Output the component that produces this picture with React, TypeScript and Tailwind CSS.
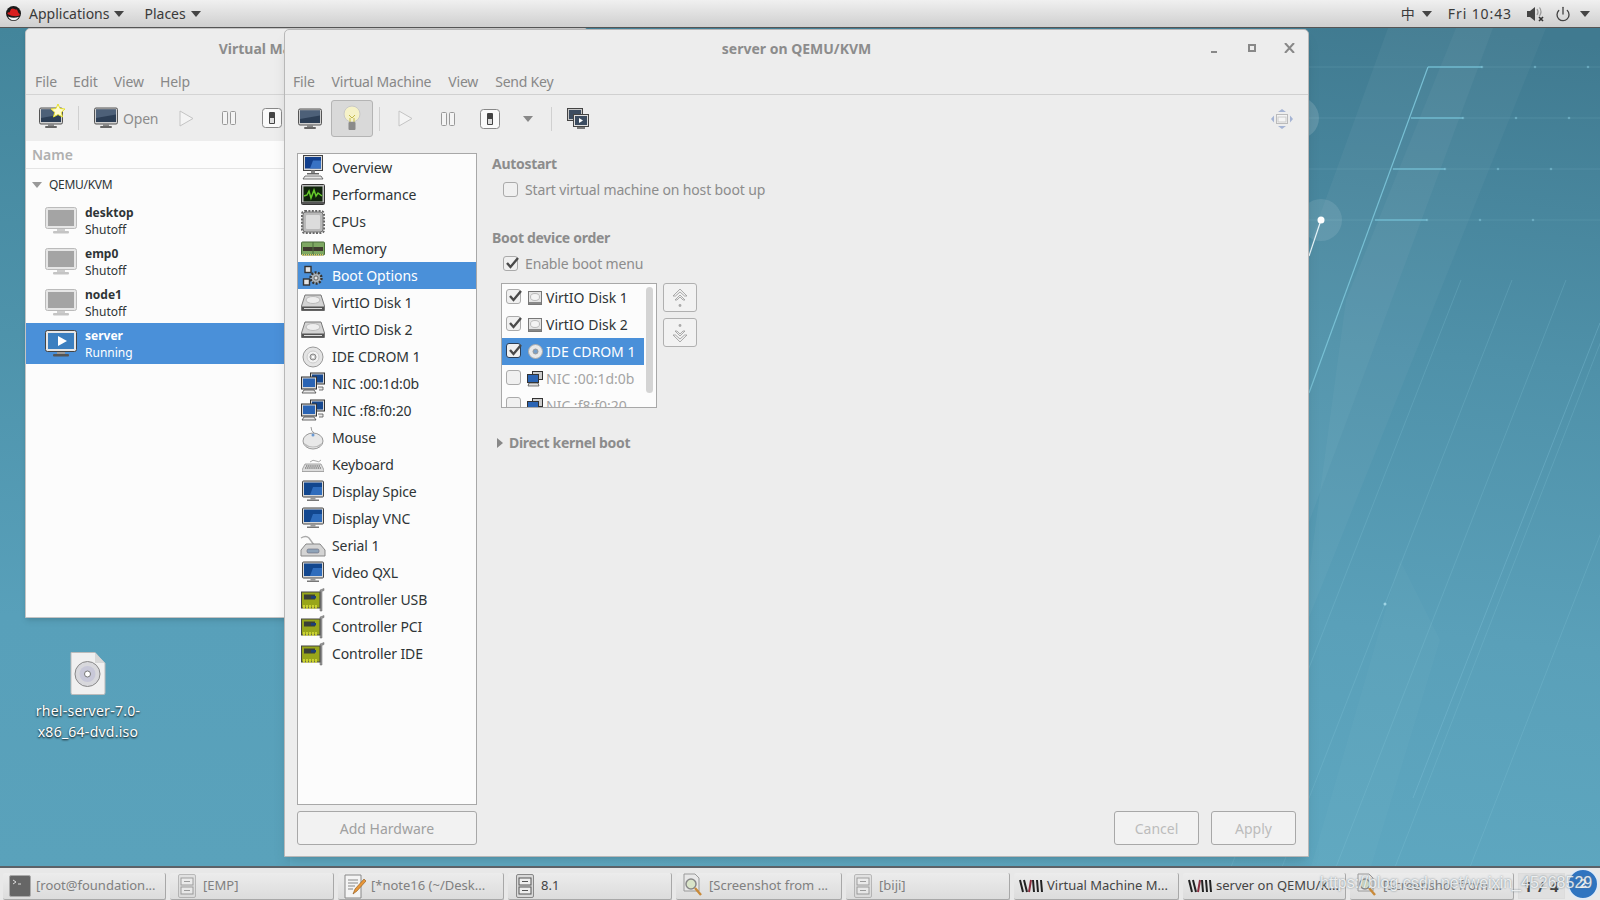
import React from 'react'
import { Power } from 'lucide-react'

const Caret = ({ className = '' }: { className?: string }) => (
  <svg width="10" height="6" viewBox="0 0 10 6" className={className}>
    <path d="M0 0h10L5 6z" fill="currentColor" />
  </svg>
)

const ToolMonitor = () => (
  <svg width="24" height="22" viewBox="0 0 24 22">
    <rect x="0.5" y="1" width="23" height="16" rx="1.5" fill="#d0d0d0" stroke="#555" />
    <rect x="2" y="2.5" width="20" height="12.5" fill="#2c3e55" />
    <path d="M2 2.5h20v5L2 11z" fill="#4d6078" />
    <rect x="9" y="17" width="6" height="2" fill="#888" />
    <rect x="6" y="19" width="12" height="2" rx="1" fill="#666" />
  </svg>
)

const Play = () => (
  <svg width="15" height="17" viewBox="0 0 15 17">
    <path d="M1 1l13 7.5L1 16z" fill="#f4f4f4" stroke="#c4c4c4" />
  </svg>
)

const Pause = () => (
  <svg width="14" height="14" viewBox="0 0 14 14">
    <rect x="0.5" y="0.5" width="5" height="13" rx="1" fill="#f4f4f4" stroke="#999" />
    <rect x="8.5" y="0.5" width="5" height="13" rx="1" fill="#f4f4f4" stroke="#999" />
  </svg>
)

const Stop = () => (
  <svg width="20" height="20" viewBox="0 0 20 20">
    <rect x="0.5" y="0.5" width="19" height="19" rx="3" fill="#fafafa" stroke="#888" />
    <rect x="7" y="4" width="6" height="12" rx="1" fill="#444" />
    <rect x="8" y="10" width="4" height="5" fill="#ddd" />
  </svg>
)

const VmMonitor = ({ running = false }: { running?: boolean }) => (
  <svg width="32" height="28" viewBox="0 0 32 28">
    <rect x="0.5" y="0.5" width="31" height="21" rx="2" fill="#e6e6e6" stroke={running ? '#444' : '#bbb'} />
    <rect x="3" y="3" width="26" height="16" fill={running ? '#3b7fc0' : '#a4a4a4'} />
    {running && <path d="M13 6l9 5-9 5z" fill="#fff" />}
    <rect x="12" y="22" width="8" height="2" fill={running ? '#999' : '#ccc'} />
    <rect x="8" y="24" width="16" height="2.5" rx="1" fill={running ? '#555' : '#c4c4c4'} />
  </svg>
)

const BlueMonitor = () => (
  <svg width="24" height="24" viewBox="0 0 24 24">
    <rect x="1.5" y="1" width="21" height="16" rx="1" fill="#d8d8d8" stroke="#444" />
    <rect x="3" y="2.5" width="18" height="12.5" fill="#12478f" />
    <path d="M9 15l3-8h9v8z" fill="#2f6dbd" />
    <rect x="9.5" y="17" width="5" height="2.5" fill="#999" />
    <rect x="6" y="19.5" width="12" height="1.5" fill="#777" />
  </svg>
)

const HwIcon = ({ kind }: { kind: string }) => {
  if (kind === 'overview')
    return (
      <svg width="24" height="26" viewBox="0 0 24 26">
        <rect x="2.5" y="0.5" width="19" height="15" fill="#d8d8d8" stroke="#444" />
        <rect x="4" y="2" width="16" height="11.5" fill="#123f8c" />
        <path d="M9 13.5l3-8h8v8z" fill="#3872c4" />
        <rect x="10" y="15.5" width="4" height="3" fill="#888" />
        <rect x="6" y="18" width="12" height="1.5" fill="#666" />
        <path d="M2 24l2-3h16l2 3z" fill="#e8e8e8" stroke="#555" strokeWidth="0.8" />
      </svg>
    )
  if (kind === 'perf')
    return (
      <svg width="24" height="22" viewBox="0 0 24 22">
        <rect x="0.5" y="0.5" width="23" height="20" rx="1" fill="#bbb" stroke="#333" />
        <rect x="2.5" y="2.5" width="19" height="15" fill="#10240c" />
        <path d="M3 12l3-1 2-4 2 7 3-8 2 6 2-3 4 3" fill="none" stroke="#64c82a" strokeWidth="1.5" />
        <rect x="1" y="18" width="22" height="2" fill="#555" />
      </svg>
    )
  if (kind === 'cpu')
    return (
      <svg width="24" height="24" viewBox="0 0 24 24">
        <rect x="1" y="1" width="22" height="22" rx="3" fill="none" stroke="#666" strokeWidth="2" strokeDasharray="2 1.4" />
        <rect x="2" y="2" width="20" height="20" rx="3" fill="#b8b8b8" stroke="#777" />
        <rect x="5" y="5" width="14" height="14" rx="1" fill="#dcdcdc" />
      </svg>
    )
  if (kind === 'memory')
    return (
      <svg width="24" height="16" viewBox="0 0 24 16">
        <rect x="0.5" y="1" width="23" height="13" rx="1" fill="#7ea862" stroke="#4a6d3b" />
        <rect x="2" y="6" width="20" height="4" fill="#3e3a2e" />
        <rect x="11.5" y="1" width="1" height="13" fill="#4a6d3b" />
        <path d="M1 14h22" stroke="#d4c46a" strokeWidth="2" strokeDasharray="1 1" />
      </svg>
    )
  if (kind === 'boot')
    return (
      <svg width="22" height="22" viewBox="0 0 22 22">
        <circle cx="14" cy="13" r="5.5" fill="#aab2b8" stroke="#333" strokeWidth="2.4" strokeDasharray="2 1.4" />
        <circle cx="14" cy="13" r="2" fill="#e4e4e4" stroke="#444" strokeWidth="0.7" />
        <rect x="3" y="1.5" width="6" height="6" fill="#e4e4e4" stroke="#333" strokeWidth="1.4" />
        <rect x="1.5" y="14" width="6" height="6" fill="#e4e4e4" stroke="#333" strokeWidth="1.4" />
      </svg>
    )
  if (kind === 'disk')
    return (
      <svg width="24" height="18" viewBox="0 0 24 18">
        <path d="M4 1h16l3.5 11v4.5h-23V12z" fill="#d4d4d4" stroke="#777" />
        <path d="M1 12.5h22v4H1z" fill="#555" />
        <path d="M3 14.5h18" stroke="#ddd" />
        <ellipse cx="12" cy="6" rx="7" ry="3.5" fill="#eee" stroke="#bbb" />
      </svg>
    )
  if (kind === 'cdrom')
    return (
      <svg width="22" height="22" viewBox="0 0 22 22">
        <circle cx="11" cy="11" r="10" fill="#e4e4e4" stroke="#999" />
        <circle cx="11" cy="11" r="6" fill="#f2f2f2" stroke="#ccc" />
        <circle cx="11" cy="11" r="3" fill="#ccc" stroke="#888" />
        <circle cx="11" cy="11" r="1.2" fill="#fff" />
      </svg>
    )
  if (kind === 'nic')
    return (
      <svg width="24" height="24" viewBox="0 0 24 24">
        <rect x="9.5" y="1" width="14" height="11" fill="#d8d8d8" stroke="#333" />
        <rect x="11" y="2.5" width="11" height="8" fill="#16488f" />
        <rect x="0.5" y="5" width="15" height="12" fill="#d8d8d8" stroke="#333" />
        <rect x="2" y="6.5" width="12" height="8.5" fill="#2a64b4" />
        <path d="M1 21l2-3h10l2 3z" fill="#e8e8e8" stroke="#444" strokeWidth="0.8" />
        <path d="M17 15h5v3h-4" fill="#e8e8e8" stroke="#555" strokeWidth="0.8" />
      </svg>
    )
  if (kind === 'mouse')
    return (
      <svg width="22" height="24" viewBox="0 0 22 24">
        <path d="M9 1q0 4 3 6" fill="none" stroke="#999" />
        <ellipse cx="11" cy="15" rx="10" ry="8" fill="#e8e8e8" stroke="#999" />
        <path d="M2 17q9 7 18 0v2q-9 5-18 0z" fill="#bbb" />
        <circle cx="11" cy="9" r="1.5" fill="#6a9ad4" />
      </svg>
    )
  if (kind === 'keyboard')
    return (
      <svg width="22" height="14" viewBox="0 0 22 14">
        <path d="M8 4q3-3 6-1t5-1" fill="none" stroke="#aaa" />
        <path d="M3 6h16l3 6v1.500H0V12z" fill="#dcdcdc" stroke="#888" strokeWidth="0.7" />
        <path d="M4 8h14M3 10h16" stroke="#555" strokeWidth="1" strokeDasharray="1.4 0.7" />
      </svg>
    )
  if (kind === 'serial')
    return (
      <svg width="26" height="24" viewBox="0 0 26 24">
        <path d="M1 4q5-3 8 0l5 7" fill="none" stroke="#aaa" strokeWidth="1.4" />
        <path d="M6 10h14l5 6v6H1v-6z" fill="#d4d4d4" stroke="#888" />
        <rect x="7" y="15" width="12" height="4" rx="1.5" fill="#8fa3b8" stroke="#667" strokeWidth="0.6" />
      </svg>
    )
  if (kind === 'controller')
    return (
      <svg width="24" height="24" viewBox="0 0 24 24">
        <path d="M19 2l4-1.5v2l-2 .8V23h-2z" fill="#999" stroke="#666" strokeWidth="0.5" />
        <rect x="0.5" y="4" width="18.5" height="16" fill="#98a61a" stroke="#444" />
        <rect x="3" y="6.5" width="11" height="5" fill="#3a3f36" />
        <rect x="10" y="8" width="5" height="2.5" fill="#1c3f78" />
        <path d="M3 17v4M6 17v4M9 17v4M12 17v4M15 17v4" stroke="#d7dc3c" strokeWidth="1.6" />
      </svg>
    )
  return <BlueMonitor />
}

const hardware = [
  { name: 'Overview', kind: 'overview' },
  { name: 'Performance', kind: 'perf' },
  { name: 'CPUs', kind: 'cpu' },
  { name: 'Memory', kind: 'memory' },
  { name: 'Boot Options', kind: 'boot' },
  { name: 'VirtIO Disk 1', kind: 'disk' },
  { name: 'VirtIO Disk 2', kind: 'disk' },
  { name: 'IDE CDROM 1', kind: 'cdrom' },
  { name: 'NIC :00:1d:0b', kind: 'nic' },
  { name: 'NIC :f8:f0:20', kind: 'nic' },
  { name: 'Mouse', kind: 'mouse' },
  { name: 'Keyboard', kind: 'keyboard' },
  { name: 'Display Spice', kind: 'display' },
  { name: 'Display VNC', kind: 'display' },
  { name: 'Serial 1', kind: 'serial' },
  { name: 'Video QXL', kind: 'display' },
  { name: 'Controller USB', kind: 'controller' },
  { name: 'Controller PCI', kind: 'controller' },
  { name: 'Controller IDE', kind: 'controller' },
]

const vms = [
  { name: 'desktop', state: 'Shutoff' },
  { name: 'emp0', state: 'Shutoff' },
  { name: 'node1', state: 'Shutoff' },
  { name: 'server', state: 'Running', active: true },
]

const Check = ({ checked, dark = false, className = '' }: { checked: boolean; dark?: boolean; className?: string }) => (
  <span className={`relative block w-[15px] h-[15px] shrink-0 rounded-[3px] border bg-[#f0f0f0] ${dark ? 'border-[#2c3e55]' : 'border-[#aaaaaa]'} ${className}`}>
    {checked && (
      <svg width="16" height="14" viewBox="0 0 16 14" className="absolute left-0 -top-[1px]">
        <path d="M3 7l3.5 4L14 2" fill="none" stroke="#4a4a4a" strokeWidth="2.4" />
      </svg>
    )}
  </span>
)

const bootItems = [
  { name: 'VirtIO Disk 1', kind: 'disk', checked: true },
  { name: 'VirtIO Disk 2', kind: 'disk', checked: true },
  { name: 'IDE CDROM 1', kind: 'cdrom', checked: true, active: true },
  { name: 'NIC :00:1d:0b', kind: 'nic', checked: false },
  { name: 'NIC :f8:f0:20', kind: 'nic', checked: false },
]

const SmallBootIcon = ({ kind }: { kind: string }) => {
  if (kind === 'disk')
    return (
      <svg width="14" height="14" viewBox="0 0 14 14">
        <rect x="0.5" y="0.5" width="13" height="13" fill="#e4e4e4" stroke="#777" />
        <ellipse cx="7" cy="6" rx="4.5" ry="3.5" fill="#f4f4f4" stroke="#bbb" />
        <rect x="1" y="11" width="12" height="2" fill="#888" />
      </svg>
    )
  if (kind === 'cdrom')
    return (
      <svg width="15" height="15" viewBox="0 0 15 15">
        <circle cx="7.5" cy="7.5" r="7" fill="#e8e8e8" stroke="#aaa" />
        <circle cx="7.5" cy="7.5" r="2.5" fill="#7aa0c8" stroke="#999" />
      </svg>
    )
  return (
    <svg width="16" height="16" viewBox="0 0 16 16">
      <rect x="5.5" y="0.5" width="10" height="8" fill="#ccc" stroke="#333" />
      <rect x="0.5" y="3.5" width="11" height="8" fill="#2a64b4" stroke="#333" />
      <path d="M1 15l1-3h9l1 3z" fill="#ddd" stroke="#444" strokeWidth="0.7" />
    </svg>
  )
}

const Arrows = ({ down = false }: { down?: boolean }) => (
  <svg width="16" height="20" viewBox="0 0 16 20" className={down ? 'rotate-180' : ''}>
    <path d="M1 8l7-7 7 7-2.5 0L8 4 3.5 8zM3 12l5-5 5 5-2 0L8 9 5 12z" fill="#eee" stroke="#999" strokeWidth="0.8" />
    <circle cx="8" cy="17.5" r="1.4" fill="#aaa" />
  </svg>
)

const RedHat = () => (
  <svg width="15" height="15" viewBox="0 0 15 15">
    <circle cx="7.5" cy="7.5" r="7.5" fill="#1a1a1a" />
    <path d="M1.5 8q-.5-2 2-1.600L5 3q2-.8 3.500 0T11 3.500l1.500 3.500q2 1 1 2.400Q8 11.500 1.500 8z" fill="#d81e1e" />
    <path d="M2 10.500q6 2.500 11 .2-2 3.600-5.500 3.600T2 10.500z" fill="#f2f2f2" />
  </svg>
)

const Drawer = ({ muted = false }: { muted?: boolean }) => (
  <svg width="18" height="24" viewBox="0 0 18 24" className={muted ? 'opacity-50' : ''}>
    <rect x="0.5" y="0.5" width="17" height="23" rx="1.5" fill="#d8d8d8" stroke="#888" />
    <rect x="3" y="4" width="12" height="7" fill="#eee" stroke="#555" />
    <rect x="3" y="13" width="12" height="7" fill="#eee" stroke="#555" />
    <path d="M6 7.500h6M6 16.500h6" stroke="#555" />
  </svg>
)

const Terminal = () => (
  <svg width="22" height="22" viewBox="0 0 22 22">
    <rect x="0.5" y="0.5" width="21" height="21" rx="1.500" fill="#666" stroke="#aaa" />
    <path d="M4 5l3 2-3 2M9 9h3" stroke="#ddd" fill="none" />
  </svg>
)

const Notepad = () => (
  <svg width="22" height="26" viewBox="0 0 22 26">
    <path d="M1 2h16v23H1z" fill="#f4f4f4" stroke="#888" />
    <path d="M4 7h10M4 10h10M4 13h7M4 16h5" stroke="#888" />
    <path d="M9 21l2-5 9-10 2 2-9 10z" fill="#e8973a" stroke="#8a5518" strokeWidth="0.6" />
  </svg>
)

const Magnifier = () => (
  <svg width="22" height="26" viewBox="0 0 22 26">
    <path d="M2 1h11l4 4v13H2z" fill="#e8e8e8" stroke="#999" />
    <circle cx="9" cy="11" r="5" fill="#d9e4c8" stroke="#888" strokeWidth="1.500" />
    <path d="M13 15l6 7" stroke="#c98a3a" strokeWidth="2.400" />
  </svg>
)

const VmmLogo = () => (
  <svg width="24" height="16" viewBox="0 0 24 16">
    <path d="M1 2l3 12M5 2l3 12" stroke="#222" strokeWidth="2" />
    <path d="M10 14l2-12" stroke="#8a2f3f" strokeWidth="2" />
    <path d="M14 2l1 12M18 2l1 12M22 2l1 12" stroke="#222" strokeWidth="2" />
  </svg>
)

const tasks = [
  { label: '[root@foundation...', icon: <Terminal />, width: 'w-[163px]', tone: 'text-[#808080]' },
  { label: '[EMP]', icon: <Drawer muted />, width: 'w-[164px]', tone: 'text-[#808080]' },
  { label: '[*note16 (~/Desk...', icon: <Notepad />, width: 'w-[166px]', tone: 'text-[#808080]' },
  { label: '8.1', icon: <Drawer />, width: 'w-[164px]', tone: 'text-[#444444]' },
  { label: '[Screenshot from ...', icon: <Magnifier />, width: 'w-[166px]', tone: 'text-[#808080]' },
  { label: '[biji]', icon: <Drawer muted />, width: 'w-[164px]', tone: 'text-[#808080]' },
  { label: 'Virtual Machine M...', icon: <VmmLogo />, width: 'w-[165px]', tone: 'text-[#444444]' },
  { label: 'server on QEMU/K...', icon: <VmmLogo />, width: 'w-[163px]', tone: 'text-[#444444]' },
  { label: '[Screenshot from ...', icon: <Magnifier />, width: 'w-[164px]', tone: 'text-[#808080]' },
]

const hLines = [
  { y: 67, x: 1428, bright: 54 },
  { y: 118, x: 1411, bright: 52 },
  { y: 169, x: 1393, bright: 52 },
  { y: 220, x: 1375, bright: 52 },
]

// wallpaper: teal gradient, pale slanted bands and a thin grid
const Wallpaper = () => (
  <svg className="absolute inset-0" width="1600" height="900" viewBox="0 0 1600 900">
    <defs>
      <linearGradient id="wall" x1="0.75" y1="0" x2="0.55" y2="1">
        <stop offset="0" stopColor="#407a90" />
        <stop offset="0.35" stopColor="#4f91a9" />
        <stop offset="0.65" stopColor="#5aa0b9" />
        <stop offset="1" stopColor="#5fa9c2" />
      </linearGradient>
      <linearGradient id="strip" x1="0" y1="0" x2="0" y2="1">
        <stop offset="0" stopColor="#43859b" />
        <stop offset="0.7" stopColor="#58a0ba" />
        <stop offset="1" stopColor="#5aa2bb" />
      </linearGradient>
    </defs>
    <rect width="1600" height="900" fill="url(#wall)" />
    <path d="M1388 28h105L1280 600h-100z" fill="#ffffff" opacity="0.04" />
    <path d="M1346 300l110-272h90L1300 640z" fill="#ffffff" opacity="0.035" />
    <path d="M1400 560l-90 310h60l70-230z" fill="#ffffff" opacity="0.025" />
    <rect y="28" width="290" height="840" fill="url(#strip)" />
    {[1461, 1512, 1566, 1625, 1700].map((x) => (
      <line key={x} x1={x} y1="280" x2={x - 230} y2="867" stroke="#8ccbe0" strokeOpacity="0.22" />
    ))}
    <line x1="1600" y1="323" x2="1413" y2="798" stroke="#8ccbe0" strokeOpacity="0.3" />
    {hLines.map((l) => (
      <g key={l.y}>
        <line x1="1309" y1={l.y} x2="1600" y2={l.y} stroke="#a5d8e8" strokeOpacity="0.14" />
        <line x1={l.x} y1={l.y} x2={l.x + l.bright} y2={l.y} stroke="#6fb8ce" strokeWidth="1.300" />
        {[l.x + l.bright, l.x + l.bright + 53, l.x + l.bright + 106].map((x) => (
          <circle key={x} cx={x} cy={l.y} r="1.300" fill="#7fc2d6" opacity="0.6" />
        ))}
      </g>
    ))}
    <line x1="1428" y1="67" x2="1309" y2="393" stroke="#78c0d4" strokeWidth="1.200" />
    <circle cx="1298" cy="118" r="21" fill="#ffffff" opacity="0.14" />
    <circle cx="1321" cy="220" r="21" fill="#ffffff" opacity="0.1" />
    <line x1="1321" y1="220" x2="1309" y2="256" stroke="#e8f6fa" strokeWidth="1.200" />
    <circle cx="1321" cy="220" r="3.500" fill="#ffffff" />
    <circle cx="1385" cy="604" r="1.500" fill="#9fd4e4" />
  </svg>
)

const App = () => {
  return (
    <div className="relative w-[1600px] h-[900px] overflow-hidden flex flex-col font-['Noto_Sans','Noto_Sans_CJK_SC',sans-serif] text-[14px]">
      <Wallpaper />

      {/* top panel */}
      <div className="relative z-10 h-[28px] shrink-0 flex items-center bg-gradient-to-b from-[#f0f0f0] to-[#cfcfcf] border-b border-[#555555] text-[#3a3a3a]">
        <div className="ml-[6px] flex"><RedHat /></div>
        <span className="ml-[8px]">Applications</span>
        <Caret className="ml-[5px] text-[#444444]" />
        <span className="ml-[20px]">Places</span>
        <Caret className="ml-[5px] text-[#444444]" />
        <div className="ml-auto flex items-center">
          <span>中</span>
          <Caret className="ml-[7px] text-[#444444]" />
          <span className="ml-[16px] tracking-[0.9px]">Fri 10:43</span>
          <svg width="18" height="16" viewBox="0 0 18 16" className="ml-[15px]">
            <path d="M0 5h3l5-4v14l-5-4H0z" fill="#444" />
            <path d="M10 3q2 3 0 6M12.500 1.500q3 4 0 8.500" fill="none" stroke="#999" strokeWidth="1.200" />
            <path d="M12 11l4 4M16 11l-4 4" stroke="#333" strokeWidth="1.600" />
          </svg>
          <Power size={16} strokeWidth={2} className="ml-[10px] text-[#444444]" />
          <Caret className="ml-[9px] mr-[10px] text-[#444444]" />
        </div>
      </div>

      {/* desktop */}
      <div className="relative flex-1">
        <div className="absolute left-[70px] top-[624px] flex flex-col items-center w-[36px]">
          <svg width="36" height="43" viewBox="0 0 36 43">
            <path d="M1 .5h24l10 11V41a1.500 1.500 0 0 1-1.500 1.500h-31A1.500 1.500 0 0 1 1 41z" fill="#f0f0f0" stroke="#bbb" />
            <path d="M25 .5V11h10z" fill="#d8d8d8" />
            <circle cx="17.500" cy="22" r="12.500" fill="#d8d8dc" stroke="#888" />
            <circle cx="17.500" cy="22" r="8" fill="#c8c8d8" />
            <circle cx="17.500" cy="22" r="3" fill="#fff" stroke="#777" />
          </svg>
        </div>
        <div className="absolute left-[23px] top-[672px] w-[130px] text-center text-white leading-[21px] tracking-[0.25px] [text-shadow:0_1px_2px_#000]">
          rhel-server-7.0-
          <br />
          x86_64-dvd.iso
        </div>

        {/* manager window, behind */}
        <div className="absolute left-[25px] top-0 w-[564px] h-[590px] flex flex-col bg-[#ededed] rounded-t-[5px] border border-[#c4c4c4] shadow-md">
          <div className="h-[39px] shrink-0 flex items-center justify-center font-bold text-[#8c8c8c]">Virtual Machine Manager</div>
          <div className="h-[27px] shrink-0 flex items-center gap-[16px] pl-[9px] text-[#888888] tracking-[-0.1px] border-b border-[#d4d4d4]">
            <span>File</span>
            <span>Edit</span>
            <span>View</span>
            <span>Help</span>
          </div>
          <div className="h-[46px] shrink-0 flex items-center">
            <div className="relative ml-[13px] flex">
              <ToolMonitor />
              <svg width="14" height="14" viewBox="0 0 14 14" className="absolute -right-[2px] -top-[3px]">
                <path d="M7 0l2 4.500 5 .5-3.700 3.300L11.500 13 7 10.500 2.500 13l1.200-4.700L0 5l5-.5z" fill="#fffbd0" stroke="#e6e030" />
              </svg>
            </div>
            <div className="ml-[15px] w-px h-[24px] bg-[#d0d0d0]" />
            <div className="ml-[15px] flex"><ToolMonitor /></div>
            <span className="ml-[5px] text-[#8c8c8c] tracking-[-0.2px]">Open</span>
            <div className="ml-[21px] flex"><Play /></div>
            <div className="ml-[28px] flex"><Pause /></div>
            <div className="ml-[26px] flex"><Stop /></div>
          </div>
          <div className="flex-1 bg-[#fcfcfc] flex flex-col">
            <div className="h-[28px] shrink-0 flex items-center pl-[6px] font-semibold text-[#b0b0b0] border-b border-[#e4e4e4]">Name</div>
            <div className="h-[31px] shrink-0 flex items-center pl-[6px] text-[12px] tracking-[-0.3px] text-[#2e3436]">
              <Caret className="text-[#999999]" />
              <span className="ml-[7px]">QEMU/KVM</span>
            </div>
            {vms.map((vm) => (
              <div key={vm.name} className={`h-[41px] shrink-0 flex items-center pl-[19px] text-[12px] leading-[17px] ${vm.active ? 'bg-[#4a90d9] text-white' : 'text-[#2e3436]'}`}>
                <VmMonitor running={vm.active} />
                <div className="ml-[8px]">
                  <div className="font-bold">{vm.name}</div>
                  <div>{vm.state}</div>
                </div>
              </div>
            ))}
          </div>
        </div>

        {/* vm details window */}
        <div className="absolute left-[284px] top-[1px] w-[1025px] h-[828px] flex flex-col bg-[#ededed] rounded-t-[5px] border border-[#b8b8b8] shadow-lg">
          <div className="relative h-[38px] shrink-0 flex items-center justify-center pb-[2px] font-bold text-[#8c8c8c]">
            server on QEMU/KVM
            <div className="absolute right-[13px] top-[13px] flex items-center text-[#888888]">
              <span className="w-[6px] h-[2px] mt-[8px] bg-current" />
              <span className="ml-[31px] w-[8px] h-[8px] border-2 border-current" />
              <svg width="11" height="10" viewBox="0 0 11 10" className="ml-[28px]">
                <path d="M1 0l9 10M10 0L1 10" stroke="currentColor" strokeWidth="2" />
              </svg>
            </div>
          </div>
          <div className="h-[27px] shrink-0 flex items-center gap-[17px] pl-[8px] text-[#888888] tracking-[-0.2px] border-b border-[#d0d0d0]">
            <span>File</span>
            <span>Virtual Machine</span>
            <span>View</span>
            <span>Send Key</span>
          </div>
          <div className="h-[47px] shrink-0 flex items-center">
            <div className="ml-[4px] w-[42px] flex justify-center"><ToolMonitor /></div>
            <div className="w-[42px] h-[37px] flex items-center justify-center rounded-[3px] border border-[#b4b4b4] bg-[#d9d9d9]">
              <svg width="18" height="27" viewBox="0 0 18 27">
                <circle cx="9" cy="9" r="8" fill="#f6f2c8" stroke="#c8c8c8" />
                <path d="M6 10l3 3 3-3" fill="none" stroke="#c2b84a" />
                <path d="M7 13v4M11 13v4" stroke="#c2b84a" />
                <rect x="5.500" y="17" width="7" height="8" rx="1" fill="#8a8a8a" />
              </svg>
            </div>
            <div className="ml-[6px] w-px h-[24px] bg-[#d0d0d0]" />
            <div className="ml-[4px] w-[42px] flex justify-center"><Play /></div>
            <div className="ml-[1px] w-[42px] flex justify-center"><Pause /></div>
            <div className="w-[42px] flex justify-center"><Stop /></div>
            <div className="w-[34px] flex justify-center"><Caret className="text-[#888888]" /></div>
            <div className="ml-[6px] w-px h-[24px] bg-[#d0d0d0]" />
            <div className="ml-[5px] w-[42px] flex justify-center">
              <svg width="22" height="22" viewBox="0 0 22 22">
                <rect x="0.5" y="0.5" width="15" height="12" fill="#c8c8c8" stroke="#444" />
                <rect x="2" y="2" width="12" height="9" fill="#3c4c60" />
                <rect x="6.500" y="6.500" width="15" height="12" fill="#e0e0e0" stroke="#444" />
                <rect x="8" y="8" width="12" height="9" fill="#3c4c60" />
                <path d="M12 10l4 2.500-4 2.500z" fill="#fff" />
                <rect x="10" y="19" width="8" height="2" fill="#777" />
              </svg>
            </div>
            <div className="ml-auto mr-[5px] w-[42px] flex justify-center">
              <svg width="22" height="20" viewBox="0 0 22 20">
                <path d="M11 0l4 3H7zM11 20l-4-3h8zM0 10l3-3.500v7zM22 10l-3-3.500v7z" fill="#a5b4d4" />
                <rect x="5.500" y="5.500" width="11" height="9" fill="#f4f4f4" stroke="#bbb" />
                <rect x="7" y="8" width="8" height="5" fill="none" stroke="#ccc" />
              </svg>
            </div>
          </div>

          <div className="flex-1 min-h-0 flex pt-[11px] pb-[11px] pl-[12px] pr-[12px]">
            <div className="w-[180px] shrink-0 flex flex-col">
              <div className="flex-1 bg-[#fcfcfc] border border-[#a8a8a8]">
                {hardware.map((item) => {
                  const active = item.name === 'Boot Options'
                  return (
                    <div key={item.name} className={`h-[27px] flex items-center tracking-[-0.1px] ${active ? 'bg-[#4a90d9] text-white' : 'text-[#2e3436]'}`}>
                      <div className="w-[28px] ml-[1px] flex justify-center shrink-0"><HwIcon kind={item.kind} /></div>
                      <span className="ml-[5px]">{item.name}</span>
                    </div>
                  )
                })}
              </div>
              <button className="mt-[6px] h-[34px] shrink-0 rounded-[3px] border border-[#a8a8a8] bg-[#f2f2f2] text-[#a0a0a0]">Add Hardware</button>
            </div>

            <div className="flex-1 flex flex-col pl-[15px]">
              <div className="flex-1 text-[#8c8c8c] tracking-[-0.14px]">
                <div className="mt-[1px] font-bold leading-[20px] tracking-[-0.3px]">Autostart</div>
                <div className="mt-[5px] ml-[11px] flex items-center gap-[7px] h-[20px]">
                  <Check checked={false} />
                  <span>Start virtual machine on host boot up</span>
                </div>
                <div className="mt-[29px] font-bold leading-[20px] tracking-[-0.3px]">Boot device order</div>
                <div className="mt-[5px] ml-[11px] flex items-center gap-[7px] h-[20px]">
                  <Check checked />
                  <span>Enable boot menu</span>
                </div>
                <div className="mt-[10px] ml-[9px] flex items-start">
                  <div className="relative w-[156px] h-[125px] overflow-hidden border border-[#a8a8a8] bg-[#fcfcfc]">
                    {bootItems.map((b) => (
                      <div key={b.name} className={`w-[142px] h-[27px] flex items-center pl-[4px] tracking-normal ${b.active ? 'bg-[#4a90d9] text-white' : b.checked ? 'text-[#2e3436]' : 'text-[#a4a4a4]'}`}>
                        <Check checked={b.checked} dark={b.active} className="-mt-[3px]" />
                        <div className="w-[16px] ml-[6px] flex justify-center shrink-0"><SmallBootIcon kind={b.kind} /></div>
                        <span className="ml-[3px] whitespace-nowrap">{b.name}</span>
                      </div>
                    ))}
                    <div className="absolute left-[144px] top-[3px] w-[7px] h-[106px] rounded-full bg-[#d4d4d4]" />
                  </div>
                  <div className="ml-[6px] flex flex-col gap-[6px]">
                    <div className="w-[34px] h-[29px] flex items-center justify-center rounded-[3px] border border-[#b0b0b0] bg-[#f2f2f2]"><Arrows /></div>
                    <div className="w-[34px] h-[29px] flex items-center justify-center rounded-[3px] border border-[#b0b0b0] bg-[#f2f2f2]"><Arrows down /></div>
                  </div>
                </div>
                <div className="mt-[25px] flex items-center font-bold leading-[20px] tracking-[-0.3px]">
                  <svg width="6" height="10" viewBox="0 0 6 10" className="ml-[5px]">
                    <path d="M0 0l6 5-6 5z" fill="#888" />
                  </svg>
                  <span className="ml-[6px]">Direct kernel boot</span>
                </div>
              </div>
              <div className="h-[34px] shrink-0 flex justify-end gap-[12px]">
                <button className="w-[85px] rounded-[3px] border border-[#a8a8a8] bg-[#f2f2f2] text-[#bcbcbc]">Cancel</button>
                <button className="w-[85px] rounded-[3px] border border-[#a8a8a8] bg-[#f2f2f2] text-[#bcbcbc]">Apply</button>
              </div>
            </div>
          </div>
        </div>
      </div>

      {/* window list */}
      <div className="relative z-10 h-[34px] shrink-0 flex items-center gap-[4px] pl-[3px] pt-[4px] bg-[#e8e8e8] border-t-2 border-[#5c6268] text-[13px]">
        {tasks.map((task, i) => (
          <div key={i} className={`${task.width} h-[27px] shrink-0 flex items-center gap-[4px] pl-[5px] rounded-[2px] border-r border-b border-[#a8a8a8] bg-gradient-to-b from-[#ececec] to-[#dcdcdc] whitespace-nowrap overflow-hidden ${task.tone}`}>
            <div className="w-[24px] flex justify-center shrink-0">{task.icon}</div>
            <span>{task.label}</span>
          </div>
        ))}
        <div className="w-[47px] h-[26px] shrink-0 flex items-center justify-center border border-[#dcdcdc] bg-[#e0e0e0] text-[15px] font-bold text-[#444444] tracking-[1px]">1 / 4</div>
        <div className="-ml-[2px] -mt-[4px] w-[32px] h-[32px] shrink-0 rounded-full flex items-center justify-center border-2 border-[#dfe9f5] bg-[#2f74c0] text-white font-bold">2</div>
      </div>

      <div className="absolute z-20 left-[1320px] top-[871px] text-[16px] text-white/80 whitespace-nowrap font-['Liberation_Sans',sans-serif] [text-shadow:0_0_2px_#667780]">
        https://blog.csdn.net/weixin_45268529
      </div>
    </div>
  )
}

export default App
